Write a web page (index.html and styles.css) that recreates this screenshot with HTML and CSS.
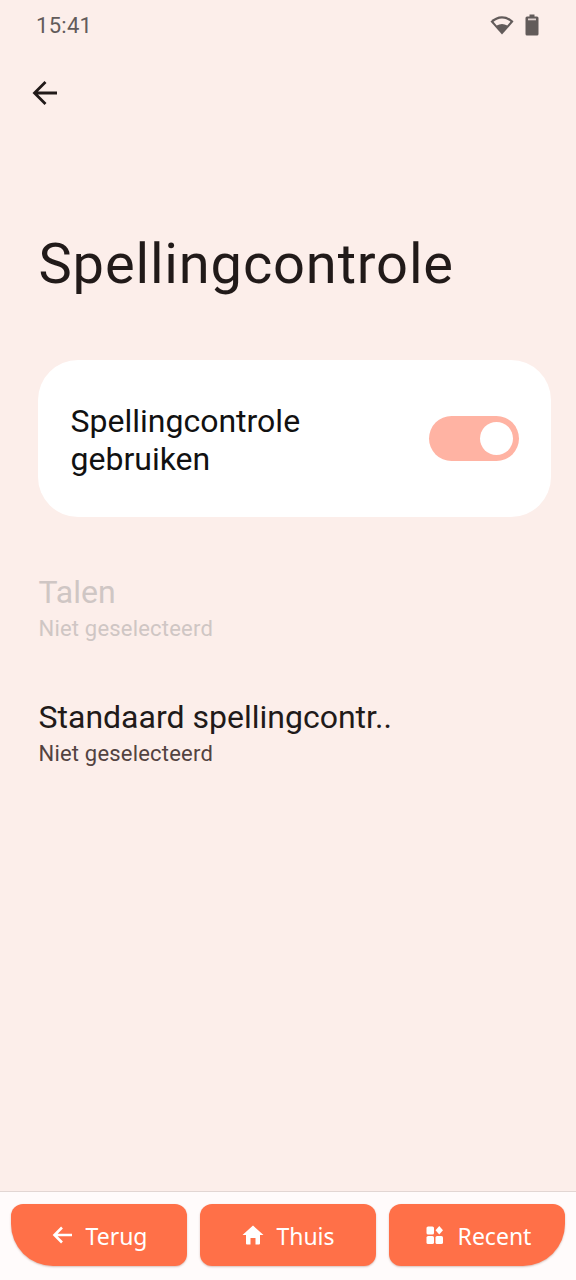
FILE: index.html
```html
<!DOCTYPE html>
<html lang="nl">
<head>
<meta charset="utf-8">
<title>Spellingcontrole</title>
<link rel="stylesheet" href="styles.css">
</head>
<body>
<div class="screen">
  <div class="status">
    <span class="time">15:41</span>
    <span class="status-icons">
      <svg class="wifi" viewBox="0 0 24 20" width="24" height="20"><path d="M12 19.500.5 6.600C3.600 3.200 7.600 1.200 12 1.200s8.400 2 11.500 5.400Z" fill="#625b5a"/><path d="M3.500 6.800C5.800 4.700 8.800 3.400 12 3.400s6.200 1.300 8.500 3.400l-3.200 3.600C15.500 9.400 13.800 8.900 12 8.900s-3.500.5-5.300 1.500Z" fill="#fceeea"/></svg>
      <svg class="battery" viewBox="0 0 14 22" width="14" height="22"><path d="M4.500.5h5v2H12A1.500 1.500 0 0 1 13.500 4v16a1.500 1.500 0 0 1-1.500 1.500H2A1.500 1.500 0 0 1 .5 20V4A1.500 1.500 0 0 1 2 2.500h2.500Z" fill="#625b5a"/><rect x="3" y="4.500" width="8" height="1.800" fill="#fceeea" opacity=".8"/></svg>
    </span>
  </div>
  <div class="toolbar">
    <svg class="back" viewBox="0 0 28 28" width="28" height="28"><path d="M26 14H4M14.500 3 3.500 14l11 11" fill="none" stroke="#211a19" stroke-width="2.800"/></svg>
  </div>
  <h1 class="title">Spellingcontrole</h1>
  <div class="card">
    <div class="card-label">Spellingcontrole gebruiken</div>
    <div class="switch"><span class="knob"></span></div>
  </div>
  <div class="item disabled">
    <div class="item-title">Talen</div>
    <div class="item-sub">Niet geselecteerd</div>
  </div>
  <div class="item">
    <div class="item-title">Standaard spellingcontr..</div>
    <div class="item-sub">Niet geselecteerd</div>
  </div>
  <nav class="nav">
    <div class="btn btn-left">
      <svg viewBox="0 0 24 24" width="24" height="24"><path d="M22 12H5M12 4.500 4.500 12l7.500 7.500" fill="none" stroke="#fff" stroke-width="2.600"/></svg>
      <span>Terug</span>
    </div>
    <div class="btn">
      <svg viewBox="0 0 24 24" width="24" height="24"><path d="M12 2.500 1.500 12H5v8.500a1 1 0 0 0 1 1h3.500V15h5v6.500H18a1 1 0 0 0 1-1V12h3.500Z" fill="#fff"/></svg>
      <span>Thuis</span>
    </div>
    <div class="btn btn-right">
      <svg viewBox="0 0 24 24" width="24" height="24"><rect x="3.500" y="3.500" width="7.500" height="8" rx="1.600" fill="#fff"/><rect x="3.500" y="13" width="7.500" height="8" rx="1.600" fill="#fff"/><rect x="12.500" y="13" width="7.500" height="8" rx="1.600" fill="#fff"/><path d="M16.250 3 20 7.300 16.250 11.600 12.500 7.300Z" fill="#fff"/></svg>
      <span>Recent</span>
    </div>
  </nav>
</div>
</body>
</html>
```
FILE: styles.css
```css
* { box-sizing: border-box; }
html, body { margin: 0; padding: 0; }
body { font-family: Roboto, sans-serif; }
.screen {
  width: 576px;
  height: 1280px;
  background: #fceeea;
  display: flex;
  flex-direction: column;
  overflow: hidden;
}
.status {
  height: 50px;
  padding: 0 37px 0 36px;
  display: flex;
  align-items: center;
  justify-content: space-between;
}
.time { font-size: 22px; color: #625b5a; letter-spacing: .3px; }
.status-icons { display: flex; align-items: center; gap: 11px; margin-bottom: 1px; }
.wifi, .battery { display: block; }
.toolbar { height: 86px; padding: 29px 0 0 31px; }
.back { display: block; }
.title {
  margin: 96px 0 0 38.5px;
  font-size: 56px;
  line-height: 64px;
  font-weight: 400;
  letter-spacing: .85px;
  color: #211a19;
}
.card {
  margin: 64px 25px 0 38px;
  height: 157px;
  background: #fff;
  border-radius: 40px;
  padding: 0 32px 0 32.5px;
  display: flex;
  align-items: center;
  justify-content: space-between;
}
.card-label {
  width: 300px;
  padding-top: 3px;
  font-size: 32px;
  line-height: 38px;
  color: #111;
}
.switch {
  width: 90px;
  height: 45px;
  border-radius: 23px;
  background: #ffb3a3;
  padding: 6px 6px 6px 51px;
}
.knob { display: block; width: 33px; height: 33px; border-radius: 50%; background: #fff; }
.item { margin: 0 0 0 38.5px; height: 125px; }
.card + .item { margin-top: 56px; }
.item-title { font-size: 32px; line-height: 38px; color: #211a19; }
.item-sub { padding-top: 3px; font-size: 22px; line-height: 30px; letter-spacing: .2px; color: #534341; }
.disabled .item-title { color: #cfc6c4; }
.disabled .item-sub { color: #cfc6c4; }
.nav {
  margin-top: auto;
  height: 89px;
  background: #fffbfb;
  border-top: 1px solid #e2d6d3;
  padding: 12px 11px 14px;
  display: flex;
  gap: 13px;
}
.btn {
  flex: 1;
  background: #ff7048;
  border-radius: 12px;
  box-shadow: 0 1px 2px rgba(120, 60, 40, .3);
  display: flex;
  align-items: center;
  justify-content: center;
  gap: 11px;
  color: #fff;
  font-family: "Noto Sans", sans-serif;
  font-size: 23px;
}
.btn span { padding-top: 1px; }
.btn svg { display: block; flex: none; }
.btn-left { border-bottom-left-radius: 42px; }
.btn-right { border-bottom-right-radius: 42px; }
```
